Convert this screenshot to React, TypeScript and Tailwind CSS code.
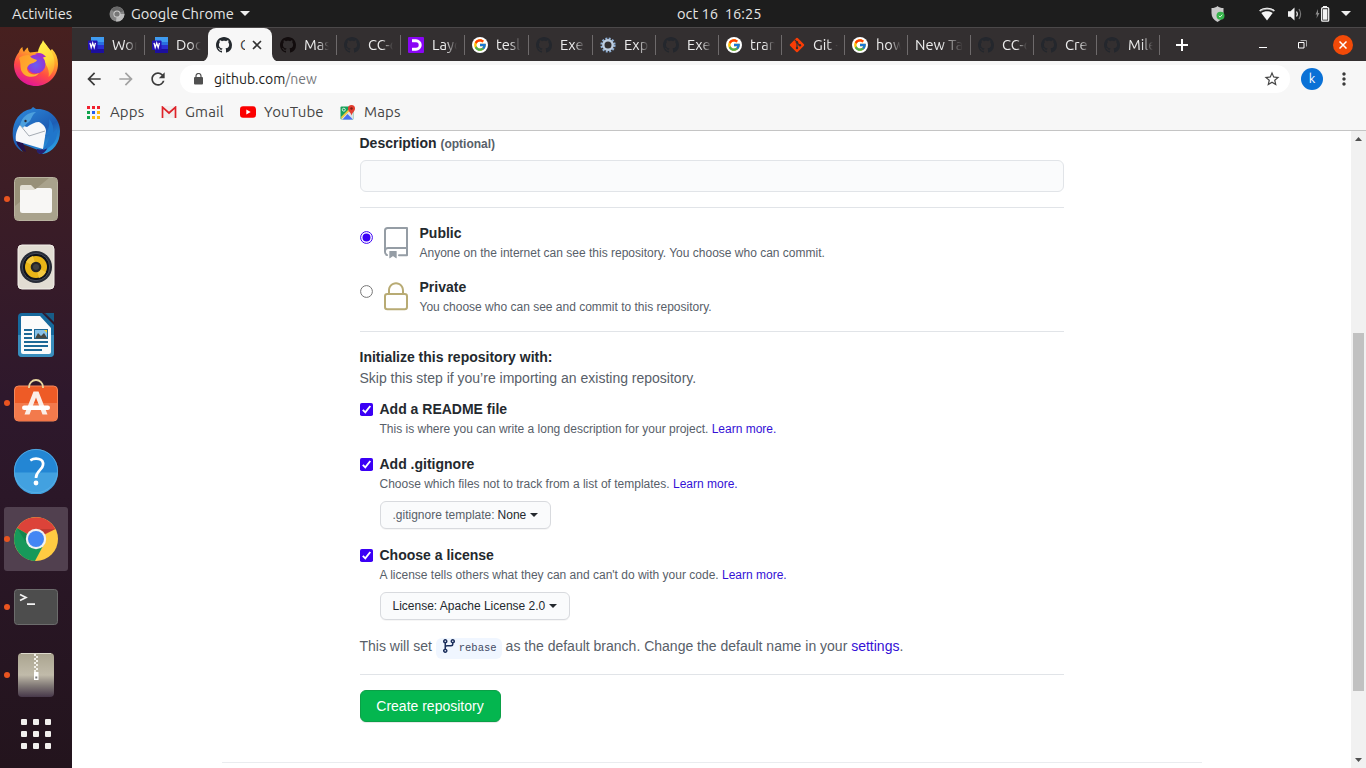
import React from "react";
import { FcGoogle } from "react-icons/fc";
import { MdArrowBack, MdArrowForward, MdRefresh, MdStarBorder, MdMoreVert } from "react-icons/md";

const GithubMark = ({ color }: { color: string }) => (
  <svg width="16" height="16" viewBox="0 0 16 16" fill={color}>
    <path d="M8 0C3.58 0 0 3.58 0 8c0 3.54 2.29 6.53 5.47 7.59.4.07.55-.17.55-.38 0-.19-.01-.82-.01-1.49-2.01.37-2.53-.49-2.69-.94-.09-.23-.48-.94-.82-1.13-.28-.15-.68-.52-.01-.53.63-.01 1.08.58 1.23.82.72 1.21 1.87.87 2.33.66.07-.52.28-.87.51-1.07-1.78-.2-3.64-.89-3.64-3.95 0-.87.31-1.59.82-2.15-.08-.2-.36-1.02.08-2.12 0 0 .67-.21 2.2.82.64-.18 1.32-.27 2-.27.68 0 1.36.09 2 .27 1.53-1.04 2.2-.82 2.2-.82.44 1.1.16 1.92.08 2.12.51.56.82 1.27.82 2.15 0 3.07-1.87 3.75-3.65 3.95.29.25.54.73.54 1.48 0 1.07-.01 1.93-.01 2.2 0 .21.15.46.55.38A8.013 8.013 0 0016 8c0-4.42-3.58-8-8-8z" />
  </svg>
);

const WordIcon = () => (
  <svg width="16" height="16" viewBox="0 0 16 16">
    <rect x="3" width="13" height="5" fill="#3f9bf0" />
    <rect x="3" y="5" width="13" height="3" fill="#2a6fe0" />
    <rect x="3" y="8" width="13" height="4" fill="#2a2fd0" />
    <rect x="3" y="12" width="13" height="4" fill="#1c0f9e" />
    <rect y="3.500" width="9.500" height="9.500" rx=".8" fill="#2412b4" />
    <path d="M2 5.800l1.200 4.700 1.500-4.500 1.500 4.500 1.200-4.700" fill="none" stroke="#fff" strokeWidth="1.300" />
  </svg>
);

const LayerIcon = () => (
  <svg width="16" height="16" viewBox="0 0 16 16">
    <rect width="16" height="16" rx="1" fill="#8a05f5" />
    <path d="M4 3.800h4a4.200 4.200 0 010 8.400H4" fill="none" stroke="#fff" strokeWidth="3" />
    <circle cx="4.800" cy="8" r="2.200" fill="#8a05f5" />
  </svg>
);

const GoogleIcon = () => (
  <span className="flex size-4 shrink-0 items-center justify-center rounded-full bg-white">
    <FcGoogle size={14} />
  </span>
);

const GearIcon = () => (
  <svg width="16" height="16" viewBox="0 0 16 16">
    <circle cx="8" cy="8" r="6.400" fill="none" stroke="#8fb0d6" strokeWidth="2.400" strokeDasharray="1.900 1.450" />
    <circle cx="8" cy="8" r="4.700" fill="none" stroke="#bdcde0" strokeWidth="2.400" />
  </svg>
);

const GitIcon = () => (
  <svg width="16" height="16" viewBox="0 0 16 16">
    <rect x="2.600" y="2.600" width="10.800" height="10.800" rx="1" fill="#f93c05" transform="rotate(45 8 8)" />
    <path d="M5.800 2.800L8 5v6M8 5.600l2.900 2.900" fill="none" stroke="#332f30" strokeWidth="1.100" />
    <circle cx="8" cy="5.200" r="1.200" fill="#332f30" />
    <circle cx="8" cy="11" r="1.200" fill="#332f30" />
    <circle cx="10.900" cy="8.200" r="1.200" fill="#332f30" />
  </svg>
);

type TabInfo = { icon?: React.ReactNode; label: string; active?: boolean; noLine?: boolean; wide?: boolean };

const dim = <GithubMark color="#24272d" />;
const tabs: TabInfo[] = [
  { icon: <WordIcon />, label: "Word", wide: true },
  { icon: <WordIcon />, label: "Docu", wide: true, noLine: true },
  { icon: <GithubMark color="#24292e" />, label: "Cr", active: true, wide: true },
  { icon: <GithubMark color="#120c0d" />, label: "Mast", wide: true },
  { icon: dim, label: "CC-c", wide: true },
  { icon: <LayerIcon />, label: "Layo", wide: true },
  { icon: <GoogleIcon />, label: "tesla", wide: true },
  { icon: dim, label: "Exe", wide: true },
  { icon: <GearIcon />, label: "Expl" },
  { icon: dim, label: "Exe" },
  { icon: <GoogleIcon />, label: "trans" },
  { icon: <GitIcon />, label: "Git -" },
  { icon: <GoogleIcon />, label: "how" },
  { label: "New Tab" },
  { icon: dim, label: "CC-c" },
  { icon: dim, label: "Cre" },
  { icon: dim, label: "Mile" },
];

function Tab({ icon, label, active, noLine, wide }: TabInfo) {
  const width = wide ? "w-16" : "w-[63px]";
  if (active) {
    return (
      <div className={`${width} relative flex h-[34px] items-center rounded-t-lg bg-[#f7f7f7] pl-2`}>
        <svg className="absolute bottom-0 -left-2" width="8" height="8"><path d="M8 0v8H0a8 8 0 008-8z" fill="#f7f7f7" /></svg>
        <svg className="absolute -right-2 bottom-0" width="8" height="8"><path d="M0 0v8h8a8 8 0 01-8-8z" fill="#f7f7f7" /></svg>
        {icon}
        <span className="ml-2 w-[5px] overflow-hidden text-[14.667px] text-[#3c3c3c]">{label}</span>
        <svg className="ml-[7px]" width="10" height="10" viewBox="0 0 10 10" stroke="#333" strokeWidth="1.600">
          <path d="M1 1l8 8M9 1L1 9" />
        </svg>
      </div>
    );
  }
  return (
    <div className={`${width} flex h-[34px] shrink-0 items-center pl-2`}>
      {icon}
      <span
        className={`${icon ? "ml-2 w-[25px]" : "w-[48px]"} overflow-hidden text-[14.667px] whitespace-nowrap text-[#ececec] [mask-image:linear-gradient(to_right,#000_55%,transparent_100%)]`}
      >
        {label}
      </span>
      <span className={`-mr-px ml-auto h-5 w-px ${noLine ? "bg-transparent" : "bg-[#6e6a6b]"}`} />
    </div>
  );
}

const Firefox = () => (
  <svg width="46" height="47" viewBox="0 0 46 47">
    <defs>
      <linearGradient id="ffa" x1=".8" y1="0" x2=".35" y2="1">
        <stop offset="0" stopColor="#fff04a" /><stop offset=".35" stopColor="#ffa428" />
        <stop offset=".68" stopColor="#ff4a45" /><stop offset="1" stopColor="#e0149a" />
      </linearGradient>
      <linearGradient id="ffb" x1="0" y1="0" x2="1" y2=".6">
        <stop offset="0" stopColor="#ff9a2a" /><stop offset="1" stopColor="#ffb52e" />
      </linearGradient>
      <radialGradient id="ffc" cx=".5" cy=".55" r=".6">
        <stop offset="0" stopColor="#6a5cf0" /><stop offset="1" stopColor="#9a2fd0" />
      </radialGradient>
      <linearGradient id="ffd" x1=".3" y1="0" x2=".6" y2="1">
        <stop offset="0" stopColor="#fff34d" /><stop offset=".6" stopColor="#ffd83a" /><stop offset="1" stopColor="#ff9a2e" />
      </linearGradient>
    </defs>
    <path d="M6 12c.5-2 1.500-4 3.500-5 0 2 .3 3.500 1.500 5 1-2 2-3.500 4-4.500 0 2 .5 4 2 5l9-1L30 1c3 3 5 6 7 10l2-2c4 4 6 9 6 15 0 12-10 22-22 22S1 37 1 25c0-5 2-9 5-13z" fill="url(#ffa)" />
    <path d="M30 0c1 4 7 8 9.500 14 4 9 2 18-4 23 1-4 0-9-3-13-1-3-2-5-5-7-3-3-3-6-1-10 1-3 3-4 3.500-7z" fill="url(#ffd)" />
    <circle cx="23" cy="24" r="9.500" fill="url(#ffc)" />
    <path d="M22 14c4-2 8-1 11 3-2 0-3 0-4 1z" fill="#a32fcb" />
    <path d="M6 18c2-2 6-3 10-3 1 2 4 4 8 5-1 3-6 3-8 5-1 1-2 2-2 4 1 5 7 7 12 4-4 6-15 5-18-3-1-4 0-8-2-12z" fill="url(#ffb)" />
  </svg>
);

const Thunderbird = () => (
  <svg width="48" height="48" viewBox="0 0 48 48">
    <defs>
      <linearGradient id="tba" x1=".2" y1="0" x2=".8" y2="1">
        <stop offset="0" stopColor="#2c86d8" /><stop offset=".55" stopColor="#1d5db4" /><stop offset="1" stopColor="#2da5e8" />
      </linearGradient>
    </defs>
    <path d="M1 31C-1 16 7 4 19 2l2-2 3 2c13-1 24 9 24 22 0 12-7 21-17 23-5 0-6-2-5-4L5 35c0 3 3 6 6 10C6 42 2 38 1 31z" fill="url(#tba)" />
    <path d="M4 34c2 6 6 9 10 11l-3-9z" fill="#23124f" />
    <path d="M25 42c4 1 8 0 11-3-1 4-3 6-6 8-4 0-6-2-5-5z" fill="#26206e" />
    <path d="M8 18l7 2c4-3 8-5 12-5 4 2 7 5 7 9l-3 18L4 34c-1-6 1-12 4-16z" fill="#f7f8fa" />
    <path d="M8 18l9 11 16-5" fill="none" stroke="#a5acb4" strokeWidth="1" />
    <path d="M8 18c2-8 8-13 16-13-5 4-4 7-7 10-3 2-4 3-6 6z" fill="#4da0dd" />
    <circle cx="13.500" cy="14" r="1.200" fill="#2b2b35" />
    <path d="M37 12c1 6-1 13-4 17l5-2c-1 8-5 13-8 16 11-2 16-11 15-21l-4 4c1-6-1-11-4-14z" fill="#2076cb" />
  </svg>
);

const Files = () => (
  <svg width="46" height="46" viewBox="0 0 46 46">
    <rect x="1.500" y="1.500" width="43" height="43" rx="4" fill="#989078" stroke="#b9b3a0" />
    <path d="M2 30L36 2h5q3 0 3 3v36q0 3-3 3H5q-3 0-3-3z" fill="#a9a28c" />
    <path d="M7 11q0-2 2-2h9l4 4h15q2 0 2 2v6H7z" fill="#e3dfd4" />
    <rect x="7" y="14" width="32" height="23" rx="2.500" fill="#f8f7f5" />
    <path d="M7 14h14l3-2h13q2 0 2 2v5H7z" fill="#f8f7f5" />
  </svg>
);

const Speaker = () => (
  <svg width="38" height="46" viewBox="0 0 38 46">
    <rect x="1" y="1" width="36" height="44" rx="4" fill="#e2ddd3" stroke="#f3f0ea" />
    <circle cx="19" cy="23" r="16" fill="#272b35" />
    <circle cx="19" cy="23" r="13.700" fill="#10131b" stroke="#464c5a" />
    <circle cx="19" cy="23" r="11" fill="#e9b517" />
    <path d="M19 23L9 18a11 11 0 017-6zM19 23l10 5a11 11 0 01-7 6z" fill="#f3c840" />
    <circle cx="19" cy="23" r="5.300" fill="#252525" />
    <circle cx="19" cy="23" r="3" fill="#404040" />
  </svg>
);

const Writer = () => (
  <svg width="38" height="46" viewBox="0 0 38 46">
    <path d="M5 1h22l10 11v29a4 4 0 01-4 4H5a4 4 0 01-4-4V5a4 4 0 014-4z" fill="#16699d" />
    <path d="M1 23h36v18a4 4 0 01-4 4H5a4 4 0 01-4-4z" fill="#398dbc" />
    <path d="M28 1h9v9z" fill="#175c88" />
    <path d="M27 1l10 10v2L25 1z" fill="#2e182c" />
    <path d="M5 4h18l11 12v24q0 2-2 2H6q-2 0-2-2V5q0-1 1-1z" fill="#fbfbfb" />
    <path d="M7 18h8M7 22h8M7 26h8M7 30h24M7 34h24M7 38h18" stroke="#1d6896" strokeWidth="2" />
    <rect x="17.500" y="17.500" width="13" height="9" fill="#87c1e8" stroke="#1d6896" />
    <path d="M18 26.500l3-5.500 3 3 3-3 3.500 5.500z" fill="#474740" />
    <path d="M27 18h3v3z" fill="#f8cf2c" />
  </svg>
);

const Software = () => (
  <svg width="46" height="50" viewBox="0 0 46 50">
    <rect x="1.500" y="8" width="43" height="35" rx="4" fill="#ee5b26" stroke="#f6895c" />
    <path d="M2 25h42v14q0 3.500-3.500 3.500h-35Q2 42.500 2 39z" fill="#f37a4c" />
    <path d="M16 10V9a7 7 0 0114 0v1" fill="none" stroke="#ead7a0" strokeWidth="1.800" />
    <path d="M20.500 13.500h5l9 23h-5l-6.500-17-6.500 17h-5z" fill="#fbeee8" />
    <rect x="9" y="27.500" width="28" height="4.500" rx="2.200" fill="#fff" />
  </svg>
);

const Help = () => (
  <svg width="46" height="46" viewBox="0 0 46 46">
    <circle cx="23" cy="23" r="22" fill="#2386d4" />
    <path d="M1 24.500h44a22 22 0 01-44 0z" fill="#42a1e0" />
    <circle cx="23" cy="23" r="21.600" fill="none" stroke="#5ab0e6" strokeWidth=".8" />
    <path d="M17.300 12.300C22 9.500 31 10 30 17c-.5 5-7.200 6-7 13" fill="none" stroke="#fff" strokeWidth="2.700" />
    <circle cx="23" cy="35" r="2.400" fill="#fff" />
  </svg>
);

const Chrome = () => (
  <svg width="46" height="46" viewBox="0 0 46 46">
    <circle cx="23" cy="23" r="22" fill="#ffcb42" />
    <path d="M23 23L4 12A22 22 0 0142.500 13z" fill="#dc4339" />
    <path d="M4 12A22 22 0 0022 45l9-17-8-5z" fill="#17995a" />
    <path d="M4 12l10 16 9-5zM23 13h19.500L31 18z" fill="#000" opacity=".13" />
    <circle cx="23" cy="23" r="10.200" fill="#f1f1f1" />
    <circle cx="23" cy="23" r="8" fill="#4386f4" />
  </svg>
);

const Terminal = () => (
  <svg width="46" height="38" viewBox="0 0 46 38">
    <rect x="1.500" y="1.500" width="43" height="35" rx="3" fill="#4d4d4d" stroke="#6c6c6c" />
    <path d="M7 6.500l6 3-6 3M14 16.200h8" fill="none" stroke="#f2f2f2" strokeWidth="1.700" />
  </svg>
);

const Archive = () => (
  <svg width="38" height="46" viewBox="0 0 38 46">
    <defs>
      <linearGradient id="ara" x1="0" y1="0" x2="0" y2="1">
        <stop offset="0" stopColor="#aaa48f" /><stop offset=".5" stopColor="#c1bbaa" />
        <stop offset=".75" stopColor="#7f7775" /><stop offset="1" stopColor="#47384a" />
      </linearGradient>
    </defs>
    <rect x="1" y="1" width="36" height="44" rx="4" fill="url(#ara)" />
    <path d="M4 1.500h30" stroke="#ddd9cd" />
    <path d="M18 2v19" stroke="#f2f0e9" strokeWidth="2" strokeDasharray="2 2" />
    <path d="M20 4v17" stroke="#f2f0e9" strokeWidth="2" strokeDasharray="2 2" />
    <rect x="17" y="20" width="4.500" height="8" fill="#fff" />
    <rect x="18.300" y="24.500" width="2" height="2" fill="#777" />
  </svg>
);

const dock: { name: string; art: React.ReactNode; running?: boolean; focused?: boolean }[] = [
  { name: "firefox", art: <Firefox /> },
  { name: "mail", art: <Thunderbird /> },
  { name: "files", art: <Files />, running: true },
  { name: "music", art: <Speaker /> },
  { name: "writer", art: <Writer /> },
  { name: "software", art: <Software />, running: true },
  { name: "help", art: <Help /> },
  { name: "chrome", art: <Chrome />, running: true, focused: true },
  { name: "terminal", art: <Terminal />, running: true },
  { name: "archive", art: <Archive />, running: true },
];

function Dock() {
  return (
    <nav className="flex w-[72px] shrink-0 flex-col items-center gap-1 bg-linear-to-b from-[#47201f] via-[#2e182c] via-50% to-[#23141d] pt-1">
      {dock.map((d) => (
        <div
          key={d.name}
          className={`relative flex size-16 shrink-0 items-center justify-center rounded-[3px] ${d.focused ? "bg-[#51404f]" : ""}`}
        >
          {d.running && <span className="absolute top-[29px] left-0 size-[6px] rounded-full bg-[#e95420]" />}
          {d.art}
        </div>
      ))}
      <div className="mt-2 grid grid-cols-3 gap-[6px]">
        {Array.from({ length: 9 }, (_, i) => (
          <span key={i} className="size-[6px] rounded-[1px] bg-[#f2f0ee]" />
        ))}
      </div>
    </nav>
  );
}

function TopBar() {
  return (
    <header className="flex h-[27px] shrink-0 items-center bg-[#1d1d1d] text-[14.667px] text-[#e6e6e6]">
      <span className="ml-3 w-[97px]">Activities</span>
      <svg width="16" height="16" viewBox="0 0 16 16">
        <circle cx="8" cy="8" r="7.500" fill="#858585" />
        <path d="M8 8L2 3.500A7.500 7.500 0 0114.500 5z" fill="#686868" />
        <path d="M8 8h7.500A7.500 7.500 0 017 15.500z" fill="#bcbcbc" />
        <circle cx="8" cy="8" r="3.600" fill="#cfcfcf" />
        <circle cx="8" cy="8" r="2.600" fill="#777" />
      </svg>
      <span className="ml-[6px] w-[105px] whitespace-nowrap">Google Chrome</span>
      <svg className="ml-1" width="10" height="5"><path d="M0 0h10L5 5z" fill="#eee" /></svg>
      <span className="ml-[427px] w-[90px] whitespace-pre">oct 16  16:25</span>
      <div className="ml-auto flex items-center pr-[15px]">
        <svg width="14" height="16" viewBox="0 0 14 16">
          <path d="M6.500 0C8 1.500 10 2 12.500 2v5c0 4-2 7-6 9C2.500 14 .5 11 .5 7V2c2.500 0 4.500-.5 6-2z" fill="#c9c9c9" />
          <circle cx="9.500" cy="9.800" r="4" fill="#35b44a" />
          <path d="M7.800 9.800l1.300 1.300 2.200-2.500" fill="none" stroke="#d9f5dd" />
        </svg>
        <svg className="ml-[34px]" width="16" height="14" viewBox="0 0 16 14">
          <path d="M.3 3.500C4-.2 12-.2 15.700 3.500l-1.200 1.300C11 2 5 2 1.500 4.800z" fill="#9a9a9a" />
          <path d="M.3 3.500C4-.2 12-.2 15.700 3.500l-.6.700C11 1 5 1 .9 4.200z" fill="#f0f0f0" />
          <path d="M2.300 6C5.500 3.600 10.500 3.600 13.700 6L8 13.500z" fill="#f4f4f4" />
        </svg>
        <svg className="ml-3" width="16" height="14" viewBox="0 0 16 14">
          <path d="M1 4.300h2.500L7.500.5v13l-4-3.800H1z" fill="#f2f2f2" />
          <path d="M9.500 4.500q1.700 2.500 0 5" fill="none" stroke="#e8e8e8" strokeWidth="1.200" />
          <path d="M12 2q3.200 5 0 10" fill="none" stroke="#777" strokeWidth="1.200" />
        </svg>
        <svg className="ml-3" width="15" height="16" viewBox="0 0 15 16">
          <path d="M3 3L.5 8.500H2L1.500 12.500 4.500 7H3z" fill="#888" />
          <path d="M8 0h4v1.500H8z" fill="#f2f2f2" />
          <rect x="6.700" y="1.700" width="7" height="13.500" rx="1" fill="none" stroke="#f2f2f2" strokeWidth="1.300" />
          <rect x="8" y="3.200" width="4.400" height="10.500" fill="#f2f2f2" />
        </svg>
        <svg className="ml-[11px]" width="10" height="5"><path d="M0 0h10L5 5z" fill="#eee" /></svg>
      </div>
    </header>
  );
}

function Browser() {
  return (
    <>
      <div className="flex h-[34px] shrink-0 items-center border-t border-[#4b4849] bg-[#332f30] pl-2">
        {tabs.map((t, i) => (
          <Tab key={i} {...t} />
        ))}
        <svg className="ml-[17px]" width="12" height="12" viewBox="0 0 12 12"><path d="M6 0v12M0 6h12" stroke="#fff" strokeWidth="2" /></svg>
        <div className="ml-auto flex items-center pr-[13px]">
          <span className="mt-[5px] h-px w-2 bg-white" />
          <svg className="ml-[31px]" width="9" height="9" viewBox="0 0 9 9" fill="none">
            <path d="M2.500.5h6v6" stroke="#aaa" /><path d="M.5 2.500h5.500v5.500H.5z" stroke="#fff" />
          </svg>
          <span className="ml-[26px] flex size-5 items-center justify-center rounded-full bg-[#f24a08]">
            <svg width="8" height="8" viewBox="0 0 8 8"><path d="M.5.5l7 7M7.500.5l-7 7" stroke="#fff" strokeWidth="1.500" /></svg>
          </span>
        </div>
      </div>
      <div className="flex h-[36px] shrink-0 items-center bg-[#f7f7f7] pl-3">
        <MdArrowBack size={20} color="#3b3b3b" />
        <MdArrowForward className="ml-3" size={20} color="#a2a2a2" />
        <MdRefresh className="ml-3" size={20} color="#3b3b3b" />
        <div className="ml-3 flex h-7 w-[1110px] items-center rounded-full bg-white pr-[9px] pl-[14px]">
          <svg width="9" height="12" viewBox="0 0 9 12">
            <rect y="4" width="9" height="7.500" rx="1" fill="#505050" />
            <path d="M2 4.500V3a2.500 2.500 0 015 0v1.500" fill="none" stroke="#505050" strokeWidth="1.200" />
          </svg>
          <span className="ml-[11px] text-[14px] text-[#1b1b1b]">github.com<span className="text-[#74767a]">/new</span></span>
          <MdStarBorder className="ml-auto" size={18} color="#454545" />
        </div>
        <span className="ml-[11px] flex size-[22px] items-center justify-center rounded-full bg-[#0a71d6] text-[13px] text-white">k</span>
        <MdMoreVert className="ml-[11px]" size={20} color="#3b3b3b" />
      </div>
      <div className="flex h-[34px] shrink-0 items-center border-b border-[#c4c4c4] bg-[#f7f7f7] pb-[3px] pl-[15px] text-[15px] tracking-[.12px] text-[#454545]">
        <div className="grid grid-cols-3 gap-[2px]">
          {["bg-[#f0212f]", "bg-[#f0212f]", "bg-[#f0212f]", "bg-[#0fa34c]", "bg-[#245df0]", "bg-[#fdbb11]", "bg-[#0fa34c]", "bg-[#fdbb11]", "bg-[#fdbb11]"].map((c, i) => (
            <span key={i} className={`size-[3px] ${c}`} />
          ))}
        </div>
        <span className="ml-[10px] w-[36px]">Apps</span>
        <svg className="ml-[15px]" width="16" height="12" viewBox="0 0 16 12">
          <rect x="1" y="0" width="14" height="12" fill="#f1eeee" />
          <path d="M1.500 12V1.200L8 7l6.500-5.800V12" fill="none" stroke="#de2329" strokeWidth="1.700" />
        </svg>
        <span className="ml-2 w-[41px]">Gmail</span>
        <svg className="ml-[14px]" width="16" height="12" viewBox="0 0 16 12">
          <rect width="16" height="11.500" y=".3" rx="3" fill="#fb0000" /><path d="M6.300 3.500v5l4.400-2.500z" fill="#fff" />
        </svg>
        <span className="ml-2 w-[62px]">YouTube</span>
        <svg className="ml-[14px]" width="16" height="15" viewBox="0 0 16 15">
          <rect x=".5" y="1.500" width="13" height="13" rx="1" fill="#18a15a" />
          <path d="M1 14L10.500 4l3 3v7.500H1z" fill="#dce1e6" />
          <path d="M2.500 14.500L7.500 9l5.500 5.500z" fill="#4a6ff2" />
          <path d="M1 12l9-9 1.200 1.200-9.500 9.500z" fill="#f6c83c" />
          <circle cx="3.800" cy="4.700" r="1.500" fill="none" stroke="#d5efdf" />
          <path d="M11.500 0a3.500 3.500 0 013.500 3.500c0 2.500-2.500 3.500-3.500 7-1-3.500-3.500-4.500-3.500-7A3.500 3.500 0 0111.500 0z" fill="#e33d2f" />
          <circle cx="11.500" cy="3.500" r="1.200" fill="#7f1c15" />
        </svg>
        <span className="ml-2">Maps</span>
      </div>
    </>
  );
}

const Check = () => (
  <svg className="mt-1 mr-[7px] shrink-0" width="13" height="13" viewBox="0 0 13 13">
    <rect width="13" height="13" rx="1.800" fill="#3b00f5" />
    <path d="M2.800 6.800l2.500 2.500 5-6.300" fill="none" stroke="#fff" strokeWidth="1.900" />
  </svg>
);

const Caret = () => <svg className="ml-1" width="8" height="4"><path d="M0 0h8L4 4z" fill="#24292e" /></svg>;

function InitOption({ title, text, children, className }: { title: string; text: string; children?: React.ReactNode; className: string }) {
  return (
    <div className={`flex ${className}`}>
      <Check />
      <div>
        <div className="h-5 font-bold text-[#24292e]">{title}</div>
        <div className="h-5 text-[12px] text-[#586069]">
          {text} <a className="text-[#3410d6]">Learn more.</a>
        </div>
        {children}
      </div>
    </div>
  );
}

function Page() {
  return (
    <main className="min-w-0 flex-1 bg-white px-[150px] pt-[2px] font-['Liberation_Sans',Arial,sans-serif] text-[14px] leading-5 text-[#586069]">
      <div className="ml-[137.5px] w-[704px]">
        <div className="h-[21px] leading-[21px] font-bold text-[#24292e]">
          Description <span className="text-[12px] text-[#586069]">(optional)</span>
        </div>
        <div className="mt-[6px] h-8 rounded-md border border-[#e1e4e8] bg-[#fafbfc]" />
        <div className="mt-[15px] h-px bg-[#e1e4e8]" />

        <div className="mt-[15px] flex h-10">
          <svg className="mt-2" width="13" height="13" viewBox="0 0 13 13">
            <circle cx="6.500" cy="6.500" r="5.900" fill="#fff" stroke="#3b00f5" /><circle cx="6.500" cy="6.500" r="4" fill="#3b00f5" />
          </svg>
          <svg className="mt-1 ml-[7px]" width="32" height="32" viewBox="0 0 24 24" fill="#959da5">
            <path fillRule="evenodd" d="M3 2.750A2.750 2.750 0 015.750 0h14.500a.75.75 0 01.75.75v20.500a.75.75 0 01-.75.75h-6a.75.75 0 010-1.500h5.250v-4H6A1.500 1.500 0 004.500 18v.75c0 .716.43 1.334 1.050 1.605a.75.75 0 01-.6 1.374A3.250 3.250 0 013 18.750v-16zM19.500 1.500V15H6c-.546 0-1.059.146-1.500.401V2.750c0-.69.56-1.250 1.250-1.250H19.500z" />
            <path d="M7 18.250a.25.25 0 01.25-.25h5a.25.25 0 01.25.25v5.010a.25.25 0 01-.397.201l-2.206-1.604a.25.25 0 00-.294 0L7.397 23.460a.25.25 0 01-.397-.2v-5.010z" />
          </svg>
          <div className="ml-[8px]">
            <div className="h-5 font-bold text-[#24292e]">Public</div>
            <div className="text-[12px]">Anyone on the internet can see this repository. You choose who can commit.</div>
          </div>
        </div>

        <div className="mt-[14px] flex h-10">
          <svg className="mt-2" width="13" height="13" viewBox="0 0 13 13"><circle cx="6.500" cy="6.500" r="5.900" fill="#fff" stroke="#767676" /></svg>
          <svg className="mt-1 ml-[7px]" width="32" height="32" viewBox="0 0 24 24" fill="#b8ab74">
            <path fillRule="evenodd" d="M6 9V7.250C6 3.845 8.503 1 12 1s6 2.845 6 6.250V9h.5a2.500 2.500 0 012.500 2.500v8a2.500 2.500 0 01-2.500 2.500h-13A2.500 2.500 0 013 19.500v-8A2.500 2.500 0 015.500 9H6zm1.500-1.750C7.500 4.580 9.422 2.500 12 2.500c2.578 0 4.500 2.080 4.500 4.750V9h-9V7.250zm-3 4.250a1 1 0 011-1h13a1 1 0 011 1v8a1 1 0 01-1 1h-13a1 1 0 01-1-1v-8z" />
          </svg>
          <div className="ml-[8px]">
            <div className="h-5 font-bold text-[#24292e]">Private</div>
            <div className="text-[12px]">You choose who can see and commit to this repository.</div>
          </div>
        </div>
        <div className="mt-[14px] h-px bg-[#e1e4e8]" />

        <div className="mt-[15px] font-bold text-[#24292e]">Initialize this repository with:</div>
        <div className="mt-px">Skip this step if you’re importing an existing repository.</div>

        <InitOption className="mt-[11px]" title="Add a README file" text="This is where you can write a long description for your project." />
        <InitOption className="mt-[15px]" title="Add .gitignore" text="Choose which files not to track from a list of templates.">
          <button className="mt-[7px] flex h-7 w-[171px] items-center rounded-md border border-[#d8dade] bg-[#fafbfc] pl-3 text-[12px] shadow-[0_1px_0_rgba(27,31,35,0.04)]">
            .gitignore template:<span className="ml-[3px] text-[#24292e]">None</span><Caret />
          </button>
        </InitOption>
        <InitOption className="mt-4" title="Choose a license" text="A license tells others what they can and can't do with your code.">
          <button className="mt-[7px] flex h-7 w-[190px] items-center rounded-md border border-[#d8dade] bg-[#fafbfc] pl-3 text-[12px] text-[#24292e] shadow-[0_1px_0_rgba(27,31,35,0.04)]">
            License: Apache License 2.0<Caret />
          </button>
        </InitOption>

        <div className="mt-4 flex h-5 items-center whitespace-pre">
          <span>This will set </span>
          <span className="mt-[5px] flex h-[21px] w-[66px] items-center rounded-md bg-[#f0f6ff] pl-[5px] text-[#3f4a63]">
            <svg className="mb-[5px]" width="16" height="16" viewBox="0 0 16 16" fill="#1b2f5c">
              <path fillRule="evenodd" d="M11.750 2.500a.75.75 0 100 1.500.75.75 0 000-1.500zm-2.250.75a2.250 2.250 0 113 2.122V6A2.500 2.500 0 0110 8.500H6a1 1 0 00-1 1v1.128a2.251 2.251 0 11-1.500 0V5.372a2.250 2.250 0 111.500 0v1.836A2.492 2.492 0 016 7h4a1 1 0 001-1v-.628A2.250 2.250 0 019.500 3.250zM4.250 12a.75.75 0 100 1.500.75.75 0 000-1.500zM3.500 3.250a.75.75 0 111.500 0 .75.75 0 01-1.500 0z" />
            </svg>
            <span className="mb-[2px] ml-[2px] font-['Liberation_Mono',monospace] text-[10.500px]">rebase</span>
          </span>
          <span> as the default branch. Change the default name in your </span>
          <a className="text-[#3410d6]">settings</a>.
        </div>
        <div className="mt-[18px] h-px bg-[#e1e4e8]" />
        <button className="mt-[15px] block h-8 w-[141px] rounded-md border border-[#0ba047] bg-[#04b64f] text-white shadow-[0_1px_0_rgba(27,31,35,0.1)]">
          Create repository
        </button>
      </div>
      <div className="mt-10 h-px w-[980px] bg-[#eaecef]" />
    </main>
  );
}

const Scrollbar = () => (
  <div className="flex w-[15px] shrink-0 flex-col items-center bg-[#f1f1f1] py-[6px]">
    <svg width="7" height="4"><path d="M0 4h7L3.500 0z" fill="#505050" /></svg>
    <span className="mt-[192px] h-[358px] w-[11px] bg-[#c1c1c1]" />
    <svg className="mt-auto" width="7" height="4"><path d="M0 0h7L3.500 4z" fill="#505050" /></svg>
  </div>
);

export default function App() {
  return (
    <div className="flex h-[768px] w-[1366px] flex-col overflow-hidden font-['Ubuntu','Noto_Sans',sans-serif]">
      <TopBar />
      <div className="flex min-h-0 flex-1">
        <Dock />
        <div className="flex min-w-0 flex-1 flex-col">
          <Browser />
          <div className="flex min-h-0 flex-1">
            <Page />
            <Scrollbar />
          </div>
        </div>
      </div>
    </div>
  );
}
